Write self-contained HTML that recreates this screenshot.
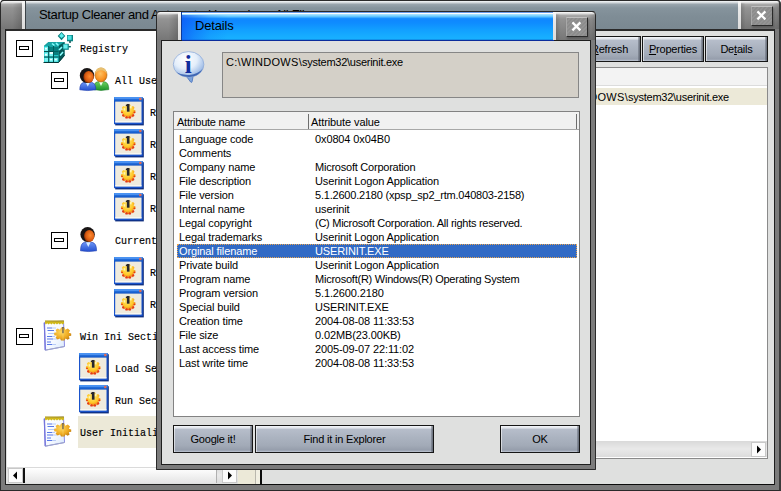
<!DOCTYPE html>
<html>
<head>
<meta charset="utf-8">
<title>Startup Cleaner</title>
<style>
html,body{margin:0;padding:0;}
body{width:781px;height:491px;position:relative;overflow:hidden;background:#fff;font-family:"Liberation Sans",sans-serif;font-size:11px;color:#000;}
.abs{position:absolute;}
#main{position:absolute;left:0;top:0;width:781px;height:491px;background:#7b7b7b;border-radius:4px 4px 0 0;overflow:hidden;}
#main .edge{position:absolute;left:0;top:0;width:778px;height:489px;border:1px solid #2a2a2a;border-right:2px solid #3a3a3a;border-radius:4px 4px 0 0;}
.tgrey{background:linear-gradient(#2a2a2a 0,#2a2a2a 1px,#f6f6f6 1px,#f0f0f0 2px,#d0d0d0 3px,#a8a8a8 4.5px,#939393 8px,#868686 18px,#767676 29px);}
.tgrey.l:after{content:"";position:absolute;left:0;top:3px;right:0;bottom:0;background:linear-gradient(90deg,rgba(0,0,0,0) 55%,rgba(0,0,0,.16) 100%);}
.tgrey.r:after{content:"";position:absolute;left:0;top:3px;right:0;bottom:0;background:linear-gradient(90deg,rgba(0,0,0,.14) 0,rgba(0,0,0,0) 12%,rgba(0,0,0,0) 82%,rgba(0,0,0,.16) 100%);}
#mt-l{left:1px;top:0;width:21px;height:29px;}
#mt-r{left:741px;top:0;width:39px;height:29px;}
#mt-c{left:26px;top:0;width:712px;height:29px;background:linear-gradient(#2a2a2a 0,#2a2a2a 1px,#f0f2f4 1px,#e6eaec 2px,#c3cacf 3px,#98a4ac 4.5px,#86949d 8px,#7f8d96 16px,#7a8891 29px);}
.wline{background:linear-gradient(#2a2a2a 0,#2a2a2a 1px,#fafafa 1px,#e9e9e9 8px,#dcdcdc 29px);}
.mtxt{font-size:13px;line-height:15px;white-space:nowrap;}
.close{position:absolute;width:20px;height:18px;background:repeating-linear-gradient(135deg,#8c8c8c 0,#8c8c8c 1.5px,#949494 1.5px,#949494 3px);border:1px solid;border-color:#c0c0c0 #2a2a2a #2a2a2a #a8a8a8;box-shadow:1px 2px 2px rgba(0,0,0,.25);}
.close svg{position:absolute;left:0;top:0;}
#content{left:5px;top:29px;width:768px;height:454px;background:#dfe0df;border:1px solid #1e1e1e;border-top:2px solid #2a2a2a;height:453px;}
#tree{left:7px;top:31px;width:249px;height:436px;background:#fff;overflow:hidden;}
.tt{position:absolute;font-family:"Liberation Mono","WenQuanYi Zen Hei",monospace;font-size:10px;line-height:14px;white-space:pre;transform-origin:0 50%;transform:translateY(1.5px) scaleY(1.18);-webkit-text-stroke:0.15px #000;}
.pm{position:absolute;width:15px;height:15px;border:1px solid #000;background:#fff;}
.pm i{position:absolute;left:2px;top:5px;width:8px;height:2px;border:1px solid #000;background:#fff;}
.sel{position:absolute;background:#ece9d8;}
.sb{position:absolute;background:linear-gradient(#d9d9d9,#e9e9e9 50%,#dcdcdc);}
.sbtn{position:absolute;width:15px;height:15px;background:#fcfcfc;border:1px solid #c8c8c8;box-sizing:border-box;}
.btn{position:absolute;box-sizing:border-box;border:1px solid #161616;background:linear-gradient(#f2f4f8 0,#eceff4 1px,#dde1e8 2px,#b6bdca 3.5px,#abb3c0 45%,#a2aab7 75%,#969eac calc(100% - 2px),#a4acba calc(100% - 1px),#c4ccd8 100%);text-align:center;white-space:nowrap;font-size:11px;}
.btn:after{content:"";position:absolute;right:0;top:0;width:2px;height:100%;background:linear-gradient(90deg,rgba(90,96,108,.35),rgba(70,76,88,.7));}
.btn:before{content:"";position:absolute;left:0;top:0;width:1px;height:100%;background:rgba(255,255,255,.55);}
.btn span{position:relative;}
#dlg{position:absolute;left:156px;top:11px;width:440px;height:459px;background:#7b7b7b;border-radius:4px 4px 0 0;overflow:hidden;}
#dlg .edge{position:absolute;left:0;top:0;width:438px;height:457px;border:1px solid #2a2a2a;border-radius:4px 4px 0 0;}
#dt-c{left:26px;top:0;width:372px;height:30px;background:linear-gradient(90deg,rgba(14,84,246,.7) 0,rgba(14,90,246,.45) 12px,rgba(16,110,250,.2) 28px,rgba(16,130,255,0) 46px) 0 4px/100% 25px no-repeat,linear-gradient(#10309a 0,#10309a 1px,#6c9ce8 1px,#6c9ce8 2px,#ffffff 2px,#ffffff 3px,#a4e2ff 3.5px,#62c6ff 5.5px,#1890ff 7.5px,#0f88ff 9px,#0f8cff 12px,#12a0ff 19px,#17aeff 26px,#18b0ff 28px,#1292ea 28px,#1292ea 29px,#0030a0 29px,#0030a0 30px);}
#dcontent{left:5px;top:29px;width:428px;height:423px;background:#dfe0df;border:1px solid #1e1e1e;}
#path{left:66px;top:41px;width:355px;height:44px;background:#d4d0c8;border:1px solid #868686;}
#lv{left:17px;top:100px;width:405px;height:304px;background:#fff;border:1px solid #828282;overflow:hidden;}
#lvh{left:0;top:0;width:405px;height:17px;background:#f1f1f1;border-bottom:1px solid #a8a8a8;}
.row{position:absolute;left:0;width:405px;height:14px;line-height:14px;white-space:nowrap;letter-spacing:-0.12px;}
.row b,.row u{position:absolute;top:0;font-weight:normal;text-decoration:none;}
.row b{left:5px;}
.row u{left:141px;}
.row.hl{left:3px;width:400px;background:#316ac5;color:#fff;outline:1px dotted #e8a450;outline-offset:-1px;}
.row.hl b{left:2px;}
.row.hl u{left:138px;}
</style>
</head>
<body>
<svg width="0" height="0" style="position:absolute">
 <defs>
  <linearGradient id="g-tb" x1="0" y1="0" x2="0" y2="1"><stop offset="0" stop-color="#3a8cf0"/><stop offset="1" stop-color="#0a4cc0"/></linearGradient>
  <radialGradient id="g-gear" cx="0.45" cy="0.35" r="0.7"><stop offset="0" stop-color="#ffe870"/><stop offset="0.55" stop-color="#ffc828"/><stop offset="1" stop-color="#e85a10"/></radialGradient>
  <radialGradient id="g-gear2" cx="0.4" cy="0.35" r="0.75"><stop offset="0" stop-color="#ffd860"/><stop offset="0.6" stop-color="#eeaa20"/><stop offset="1" stop-color="#b87410"/></radialGradient>
  <radialGradient id="g-face1" cx="0.6" cy="0.45" r="0.6"><stop offset="0" stop-color="#ff8a30"/><stop offset="0.7" stop-color="#d85a10"/><stop offset="1" stop-color="#8a3008"/></radialGradient>
  <radialGradient id="g-face2" cx="0.45" cy="0.4" r="0.65"><stop offset="0" stop-color="#ffc060"/><stop offset="0.7" stop-color="#f89020"/><stop offset="1" stop-color="#c86810"/></radialGradient>
  <linearGradient id="g-blue" x1="0" y1="0" x2="0" y2="1"><stop offset="0" stop-color="#6c94f4"/><stop offset="1" stop-color="#2450d0"/></linearGradient>
  <linearGradient id="g-green" x1="0" y1="0" x2="0" y2="1"><stop offset="0" stop-color="#6cd060"/><stop offset="1" stop-color="#1c9428"/></linearGradient>
  <linearGradient id="g-page" x1="0" y1="0" x2="1" y2="1"><stop offset="0" stop-color="#ffffff"/><stop offset="0.6" stop-color="#f4f8ff"/><stop offset="1" stop-color="#d8e8fc"/></linearGradient>
  <radialGradient id="g-bub" cx="0.4" cy="0.3" r="0.75"><stop offset="0" stop-color="#ffffff"/><stop offset="0.5" stop-color="#e4eefa"/><stop offset="0.85" stop-color="#a4c0e8"/><stop offset="1" stop-color="#5c84c8"/></radialGradient>
 </defs>

 <!-- registry: origin page (43,31) size 30x34 -->
 <symbol id="i-reg" viewBox="0 0 30 34">
  <path d="M1 15 L5.5 11 L21.5 11 L21.5 24.5 L15.5 31.5 L1 31.5 Z" fill="#0a7c7c"/>
  <path d="M1 15 L5.5 11 L21.5 11 L15.5 15 Z" fill="#18a4a4"/>
  <path d="M15.5 15 L21.5 11 L21.5 24.5 L15.5 31.5 Z" fill="#045858"/>
  <rect x="1" y="15" width="14.5" height="16.5" fill="#22c8c8"/>
  <g fill="#7cf4f4"><rect x="1.5" y="16" width="3.6" height="4"/><rect x="6.3" y="21.5" width="3.6" height="4"/><rect x="1.5" y="21.5" width="3.6" height="4"/><rect x="1.5" y="27" width="3.6" height="3.6"/><rect x="6.3" y="27" width="3.6" height="3.6"/><rect x="11.1" y="27" width="3.6" height="3.6"/></g>
  <g fill="#e8ffff"><rect x="6.5" y="20.5" width="3.5" height="2.5"/><rect x="2" y="17" width="2" height="1.5"/><rect x="2" y="23" width="2" height="1.5"/><rect x="7" y="28" width="2" height="1.2"/><rect x="11.8" y="28" width="2" height="1.2"/></g>
  <g stroke="#035050" stroke-width="1" fill="none"><path d="M1 20.5 H15.5 M1 26 H15.5 M5.7 15 V31.5 M10.5 15 V31.5"/></g>
  <path d="M6 15.5 L15.5 15.5 L15.5 24 L10.5 24 L10.5 20 L6 20 Z" fill="#066" opacity=".75"/>
  <path d="M9 12.5 L11.5 14.5 M13 12 L15.5 14.5 M16 19 L19 16 M17 24.5 L20 21" stroke="#8ff" stroke-width="1.6"/>
  <path d="M0.5 31.5 H15.5 L21.5 24.5" stroke="#023838" stroke-width="1" fill="none"/>
  <!-- flying cubes -->
  <path d="M18.5 1 L22.3 5 L18.5 9.3 L14.7 5 Z" fill="#0a8080"/>
  <path d="M18.5 2 L21 5 L18.5 7 L16.2 5 Z" fill="#5cf0f0"/>
  <rect x="24" y="4" width="6" height="6.3" fill="#0a8484"/>
  <rect x="24.6" y="4.6" width="4" height="4.2" fill="#4ce4e4"/>
  <rect x="26.3" y="10" width="1.4" height="2" fill="#044"/>
  <rect x="19.8" y="12.8" width="6" height="6" fill="#0a8888"/>
  <rect x="20.4" y="13.4" width="4.2" height="4.2" fill="#6cf0f0"/>
  <rect x="25.5" y="15" width="2.3" height="1.4" fill="#066"/>
 </symbol>

 <!-- two users: origin page (79,65) size 32x30 -->
 <symbol id="i-users" viewBox="0 0 32 30">
  <!-- right person (green) behind -->
  <path d="M14.5 24.6 Q14.5 17.6 18.5 16.8 L25.5 16.8 Q29.8 17.6 29.8 24.6 Q22 26.2 14.5 24.6 Z" fill="url(#g-green)" stroke="#147820" stroke-width=".6"/>
  <path d="M20 16.8 L22 21 L24 16.8 Z" fill="#f0fff0"/>
  <ellipse cx="22" cy="10" rx="6" ry="7" fill="url(#g-face2)" stroke="#b06810" stroke-width=".6"/>
  <path d="M16.2 9 Q16.5 2.6 22 2.6 Q27.5 2.6 27.8 9 Q26 5.2 22 5.2 Q18 5.2 16.2 9 Z" fill="#e8c070"/>
  <!-- left person (blue) -->
  <path d="M0.8 24.8 Q0.8 18 5 17.3 L12.5 17.3 Q16.8 18 16.8 24.8 Q8.5 26.3 0.8 24.8 Z" fill="url(#g-blue)" stroke="#1c3cb0" stroke-width=".6"/>
  <path d="M6.5 17.3 L8.8 21.6 L11 17.3 Z" fill="#d8ecff"/>
  <ellipse cx="8" cy="10.5" rx="7.2" ry="7.6" fill="#181414"/>
  <ellipse cx="9.6" cy="12" rx="5.2" ry="6" fill="url(#g-face1)"/>
 </symbol>

 <!-- single user: origin page (79,225) size 32x30 -->
 <symbol id="i-user" viewBox="0 0 32 30">
  <path d="M1.5 25.8 Q1.5 18 5.5 17.3 L13 17.3 Q17.6 18 17.6 25.8 Q9.5 27.3 1.5 25.8 Z" fill="url(#g-blue)" stroke="#1c3cb0" stroke-width=".6"/>
  <path d="M7 17.3 L9.3 22 L11.6 17.3 Z" fill="#d8ecff"/>
  <ellipse cx="8.6" cy="9.5" rx="7.2" ry="7.6" fill="#181414"/>
  <ellipse cx="10.2" cy="11" rx="5.2" ry="6" fill="url(#g-face1)"/>
 </symbol>

 <!-- window w/ gear: origin page (114,97) size 30x30 -->
 <symbol id="i-win" viewBox="0 0 30 30">
  <rect x="1.2" y="1.2" width="28.6" height="27.2" fill="#0c2a78"/>
  <rect x="0" y="0" width="28.7" height="27.2" fill="#1a54cc"/>
  <rect x="0" y="0" width="28.7" height="5" fill="url(#g-tb)"/>
  <rect x="0.5" y="0.6" width="27.5" height="0.9" fill="#6ca8fc"/>
  <rect x="1.2" y="4.6" width="26.3" height="20.8" fill="#efebde"/>
  <rect x="1.2" y="24.2" width="26.3" height="1.2" fill="#fbfaf4"/>
  <rect x="25.2" y="0.8" width="2.2" height="2.4" fill="#e8684c"/>
  <g transform="translate(14.2,14.9) scale(1.1)">
   <path d="M0 -6.8 L2 -6.4 L2.6 -4.6 L4.5 -5.3 L5.8 -3.8 L4.8 -2.2 L6.6 -1.2 L6.6 0.9 L4.8 1.4 L5.3 3.4 L3.8 4.8 L2.2 3.9 L1.2 5.8 L-1.2 5.8 L-2.2 3.9 L-3.8 4.8 L-5.3 3.4 L-4.8 1.4 L-6.6 0.9 L-6.6 -1.2 L-4.8 -2.2 L-5.8 -3.8 L-4.5 -5.3 L-2.6 -4.6 L-2 -6.4 Z" fill="url(#g-gear)"/>
   <g fill="#e43818"><circle cx="-4.6" cy="3.2" r="1"/><circle cx="-1.6" cy="5" r="1.1"/><circle cx="1.6" cy="5" r="1.1"/><circle cx="4.6" cy="3.2" r="1"/><circle cx="-5.6" cy="0.4" r=".8"/><circle cx="5.6" cy="0.4" r=".8"/></g>
   <rect x="-1.2" y="-7.2" width="2.4" height="7" fill="#26262e"/>
   <rect x="-2.1" y="-6.6" width="1.1" height="1.3" fill="#26262e"/>
   <rect x="1.5" y="-5.6" width="1.6" height="2.4" fill="#fff6b0"/>
   <rect x="-4.2" y="-3.4" width="1.4" height="2.2" fill="#fff6b0"/>
  </g>
 </symbol>

 <!-- notepad w/ gear: origin page (43,320) size 30x32 -->
 <symbol id="i-note" viewBox="0 0 30 32">
  <path d="M1.2 2.5 L20.5 1 L21.5 26.5 L2.2 30.2 Z" fill="url(#g-page)" stroke="#8c8ce4" stroke-width="1"/>
  <path d="M1.4 3 L2.3 30" stroke="#7474dc" stroke-width="1.3"/>
  <path d="M2.2 30.2 L21.5 26.5" stroke="#a0a8c8" stroke-width="1"/>
  <g stroke="#5878e8" stroke-width="1"><path d="M4 8 H9"/><path d="M4.5 10.5 H11"/><path d="M4 16.5 H9"/><path d="M4 19 H10"/><path d="M4 22 H8"/><path d="M4 24.5 H9"/></g>
  <g stroke="#b8ccf8" stroke-width="1"><path d="M9 8 H13"/><path d="M5 13.5 H12"/><path d="M9 16.5 H12"/><path d="M10 19 H14"/><path d="M9 24.5 H13"/></g>
  <path d="M2 1.3 H21 V3.2 L19.6 4.6 L18.2 3.2 L16.8 4.6 L15.4 3.2 L14 4.6 L12.6 3.2 L11.2 4.6 L9.8 3.2 L8.4 4.6 L7 3.2 L5.6 4.6 L4.2 3.2 L2.8 4.6 L2 3.2 Z" fill="#d0b818"/>
  <path d="M2 1 H21" stroke="#a89008" stroke-width="1"/>
  <g transform="translate(19.6,14.2)">
   <path d="M-1.5 -6.6 L1.8 -6.6 L2.6 -4.4 L5.2 -5.6 L7.4 -3.6 L6.2 -1.4 L8.6 -0.8 L8.6 1.6 L6.2 2 L7 4.2 L5 5.6 L3 4.2 L1.8 6.4 L-1.6 6.4 L-2.6 4.2 L-5 5.4 L-7 3.6 L-5.8 1.6 L-8.4 1 L-8.4 -1.4 L-6 -2 L-7 -4.2 L-5 -5.8 L-2.6 -4.4 Z" fill="url(#g-gear2)"/>
   <rect x="-0.4" y="-7.2" width="1.5" height="6.2" fill="#5a5248"/>
   <path d="M0.4 -6 L0.4 6" stroke="#fff0a0" stroke-width="1" opacity=".35"/>
  </g>
 </symbol>

 <!-- info bubble: origin page (172,48) size 34x38 -->
 <symbol id="i-info" viewBox="0 0 34 38">
  <path d="M13.8 27.5 L18.6 34 Q19.9 35.2 20.2 33.4 L21.3 27 Z" fill="#7ca4dc" stroke="#4870bc" stroke-width=".8"/>
  <ellipse cx="16.6" cy="16.4" rx="15.3" ry="12.8" fill="url(#g-bub)" stroke="#90acd8" stroke-width=".8"/>
  <path d="M30.6 21 Q27 28.6 17 28.9 Q9 28.9 4.5 24.3 Q10 27.6 17.5 27 Q26 26.2 30.6 21 Z" fill="#2c54a8" opacity=".8"/>
  <text x="16.2" y="25" text-anchor="middle" font-family="Liberation Serif, serif" font-weight="bold" font-size="25" fill="#102c9c">i</text>
 </symbol>
</svg>


<!-- ================= MAIN WINDOW ================= -->
<div id="main">
  <div class="abs tgrey l" id="mt-l"></div>
  <div class="abs wline" style="left:22px;top:0;width:3px;height:29px;"></div>
  <div class="abs" style="left:25px;top:0;width:1px;height:29px;background:#3c4348;"></div>
  <div class="abs" id="mt-c"></div>
  <div class="abs wline" style="left:738px;top:0;width:3px;height:29px;"></div>
  <div class="abs tgrey r" id="mt-r"></div>
  <div class="abs mtxt" style="left:39px;top:7px;letter-spacing:-0.36px;">Startup Cleaner and Automated Launcher - All Files</div>
  <div class="close" style="left:751px;top:6px;"><svg width="20" height="18" viewBox="0 0 20 18"><path d="M5.4 4.4 L13.4 12.4 M13.4 4.4 L5.4 12.4" stroke="#fff" stroke-width="2.2" fill="none"/></svg></div>

  <div class="abs" id="content"></div>

  <!-- tree panel -->
  <div class="abs" id="tree">
    <div class="pm" style="left:9px;top:9px;"><i></i></div>
    <svg class="abs" style="left:36px;top:0px;" width="30" height="34"><use href="#i-reg"/></svg>
    <div class="tt" style="left:73px;top:10px;">Registry</div>
    <div class="pm" style="left:44px;top:41px;"><i></i></div>
    <svg class="abs" style="left:72px;top:34px;" width="32" height="30"><use href="#i-users"/></svg>
    <div class="tt" style="left:108px;top:42px;">All Users</div>
    <svg class="abs" style="left:107px;top:66px;" width="30" height="30"><use href="#i-win"/></svg>
    <div class="tt" style="left:143px;top:74px;">Run</div>
    <svg class="abs" style="left:107px;top:98px;" width="30" height="30"><use href="#i-win"/></svg>
    <div class="tt" style="left:143px;top:106px;">RunOnce</div>
    <svg class="abs" style="left:107px;top:130px;" width="30" height="30"><use href="#i-win"/></svg>
    <div class="tt" style="left:143px;top:138px;">RunOnceEx</div>
    <svg class="abs" style="left:107px;top:162px;" width="30" height="30"><use href="#i-win"/></svg>
    <div class="tt" style="left:143px;top:170px;">RunServices</div>
    <div class="pm" style="left:44px;top:201px;"><i></i></div>
    <svg class="abs" style="left:72px;top:194px;" width="32" height="30"><use href="#i-user"/></svg>
    <div class="tt" style="left:108px;top:202px;">Current User</div>
    <svg class="abs" style="left:107px;top:226px;" width="30" height="30"><use href="#i-win"/></svg>
    <div class="tt" style="left:143px;top:234px;">Run</div>
    <svg class="abs" style="left:107px;top:258px;" width="30" height="30"><use href="#i-win"/></svg>
    <div class="tt" style="left:143px;top:266px;">RunOnce</div>
    <div class="pm" style="left:9px;top:297px;"><i></i></div>
    <svg class="abs" style="left:36px;top:289px;" width="30" height="32"><use href="#i-note"/></svg>
    <div class="tt" style="left:73px;top:298px;">Win Ini Section</div>
    <svg class="abs" style="left:72px;top:322px;" width="30" height="30"><use href="#i-win"/></svg>
    <div class="tt" style="left:108px;top:330px;">Load Section</div>
    <svg class="abs" style="left:72px;top:354px;" width="30" height="30"><use href="#i-win"/></svg>
    <div class="tt" style="left:108px;top:362px;">Run Section</div>
    <div class="sel" style="left:71px;top:385px;width:180px;height:32px;"></div>
    <svg class="abs" style="left:36px;top:385px;" width="30" height="32"><use href="#i-note"/></svg>
    <div class="tt" style="left:73px;top:394px;">User Initialization</div>

  </div>

  <!-- tree h-scrollbar -->
  <div class="sb" style="left:7px;top:467px;width:231px;height:16px;"></div>
  <div class="sbtn" style="left:8px;top:468px;"><svg width="13" height="13" viewBox="0 0 13 13" style="position:absolute;left:0;top:0"><path d="M8 2.5 L4 6.5 L8 10.5 Z" fill="#000"/></svg></div>
  <div class="abs" style="left:23px;top:468px;width:2px;height:15px;background:#111;"></div>
  <div class="abs" style="left:25px;top:468px;width:191px;height:15px;background:linear-gradient(#fff,#f2f2f2 50%,#e4e4e4);border-right:1px solid #b0b0b0;"></div>
  <div class="sbtn" style="left:222px;top:468px;"><svg width="13" height="13" viewBox="0 0 13 13" style="position:absolute;left:0;top:0"><path d="M5 2.5 L9 6.5 L5 10.5 Z" fill="#000"/></svg></div>
  <div class="abs" style="left:238px;top:467px;width:17px;height:17px;background:#ece9d8;"></div>
  <div class="abs" style="left:255px;top:31px;width:1px;height:453px;background:#b9b7ad;"></div>
  <div class="abs" style="left:256px;top:31px;width:4px;height:453px;background:#f1efe2;"></div>
  <div class="abs" style="left:260px;top:30px;width:2px;height:455px;background:#0c0c0c;"></div>

  <!-- right panel toolbar -->
  <div class="btn" style="left:578px;top:36px;width:63px;height:26px;line-height:25px;letter-spacing:-0.2px;"><span><u style="text-decoration:underline">R</u>efresh</span></div>
  <div class="btn" style="left:642px;top:36px;width:62px;height:26px;line-height:25px;letter-spacing:-0.2px;"><span><u style="text-decoration:underline">P</u>roperties</span></div>
  <div class="btn" style="left:705px;top:36px;width:63px;height:26px;line-height:25px;letter-spacing:-0.2px;"><span>De<u style="text-decoration:underline">t</u>ails</span></div>

  <!-- right list -->
  <div class="abs" style="left:268px;top:67px;width:500px;height:392px;background:#fff;border:1px solid #8a8a8a;box-sizing:border-box;">
    <div class="abs" style="left:0;top:0;width:498px;height:17px;background:#f3f3f3;border-bottom:1px solid #dcdcdc;"></div>
    <div class="abs" style="left:0;top:20px;width:498px;height:17px;background:#ece9d8;"></div>
    <div class="abs" style="left:283px;top:22px;line-height:15px;white-space:nowrap;"><span style="letter-spacing:0.3px">C:\WINDOWS\</span><span style="letter-spacing:-0.26px">system32\userinit.exe</span></div>
    <div class="sb" style="left:0;top:373px;width:498px;height:16px;"></div>
    <div class="sbtn" style="left:482px;top:374px;"><svg width="13" height="13" viewBox="0 0 13 13" style="position:absolute;left:0;top:0"><path d="M5 2.5 L9 6.5 L5 10.5 Z" fill="#000"/></svg></div>
  </div>

  <div class="abs" style="left:262px;top:484px;width:512px;height:1px;background:#0c0c0c;"></div>
  <div class="edge"></div>
</div>

<!-- ================= DETAILS DIALOG ================= -->
<div id="dlg">
  <div class="abs tgrey l" style="left:1px;top:0;width:21px;height:29px;"></div>
  <div class="abs wline" style="left:22px;top:0;width:3px;height:29px;"></div>
  <div class="abs" style="left:25px;top:0;width:1px;height:29px;background:#0b3a9a;"></div>
  <div class="abs" id="dt-c"></div>
  <div class="abs wline" style="left:397px;top:0;width:3px;height:29px;"></div>
  <div class="abs tgrey r" style="left:400px;top:0;width:39px;height:29px;"></div>
  <div class="abs mtxt" style="left:39px;top:7px;letter-spacing:-0.15px;">Details</div>
  <div class="close" style="left:410px;top:6px;"><svg width="20" height="18" viewBox="0 0 20 18"><path d="M5.4 4.4 L13.4 12.4 M13.4 4.4 L5.4 12.4" stroke="#fff" stroke-width="2.2" fill="none"/></svg></div>

  <div class="abs" id="dcontent"></div>
  <div class="abs" style="left:26px;top:29px;width:372px;height:1px;background:#0a2c9c;"></div>

  <div class="abs" id="path"></div>
  <svg class="abs" style="left:16px;top:37px;" width="34" height="38"><use href="#i-info"/></svg>
  <div class="abs" style="left:70px;top:44px;line-height:14px;white-space:nowrap;"><span style="letter-spacing:0.3px">C:\WINDOWS\</span><span style="letter-spacing:-0.26px">system32\userinit.exe</span></div>

  <div class="abs" id="lv">
    <div class="abs" id="lvh"></div>
    <div class="abs" style="left:134px;top:2px;width:1px;height:15px;background:#6e6e6e;"></div>
    <div class="abs" style="left:402px;top:2px;width:1px;height:15px;background:#6e6e6e;"></div>
    <div class="abs" style="left:3px;top:3px;line-height:14px;white-space:nowrap;letter-spacing:-0.25px;">Attribute name</div>
    <div class="abs" style="left:137px;top:3px;line-height:14px;white-space:nowrap;letter-spacing:-0.1px;">Attribute value</div>

    <div class="row" style="top:20px"><b>Language code</b><u>0x0804 0x04B0</u></div>
    <div class="row" style="top:34px"><b>Comments</b><u></u></div>
    <div class="row" style="top:48px"><b>Company name</b><u style="letter-spacing:-0.23px">Microsoft Corporation</u></div>
    <div class="row" style="top:62px"><b>File description</b><u>Userinit Logon Application</u></div>
    <div class="row" style="top:76px"><b>File version</b><u style="letter-spacing:-0.21px">5.1.2600.2180 (xpsp_sp2_rtm.040803-2158)</u></div>
    <div class="row" style="top:90px"><b>Internal name</b><u>userinit</u></div>
    <div class="row" style="top:104px"><b>Legal copyright</b><u style="letter-spacing:-0.27px">(C) Microsoft Corporation. All rights reserved.</u></div>
    <div class="row" style="top:118px"><b>Legal trademarks</b><u>Userinit Logon Application</u></div>
    <div class="row hl" style="top:132px"><b>Orginal filename</b><u>USERINIT.EXE</u></div>
    <div class="row" style="top:146px"><b>Private build</b><u>Userinit Logon Application</u></div>
    <div class="row" style="top:160px"><b>Program name</b><u style="letter-spacing:-0.24px">Microsoft(R) Windows(R) Operating System</u></div>
    <div class="row" style="top:174px"><b>Program version</b><u>5.1.2600.2180</u></div>
    <div class="row" style="top:188px"><b>Special build</b><u>USERINIT.EXE</u></div>
    <div class="row" style="top:202px"><b>Creation time</b><u>2004-08-08 11:33:53</u></div>
    <div class="row" style="top:216px"><b>File size</b><u>0.02MB(23.00KB)</u></div>
    <div class="row" style="top:230px"><b>Last access time</b><u>2005-09-07 22:11:02</u></div>
    <div class="row" style="top:244px"><b>Last write time</b><u>2004-08-08 11:33:53</u></div>
  </div>

  <div class="btn" style="left:17px;top:414px;width:80px;height:28px;line-height:26px;letter-spacing:-0.2px;"><span>Google it!</span></div>
  <div class="btn" style="left:99px;top:414px;width:179px;height:28px;line-height:26px;letter-spacing:-0.2px;"><span>Find it in Explorer</span></div>
  <div class="btn" style="left:344px;top:414px;width:80px;height:28px;line-height:26px;letter-spacing:-0.2px;"><span>OK</span></div>

  <div class="edge"></div>
</div>

</body>
</html>
